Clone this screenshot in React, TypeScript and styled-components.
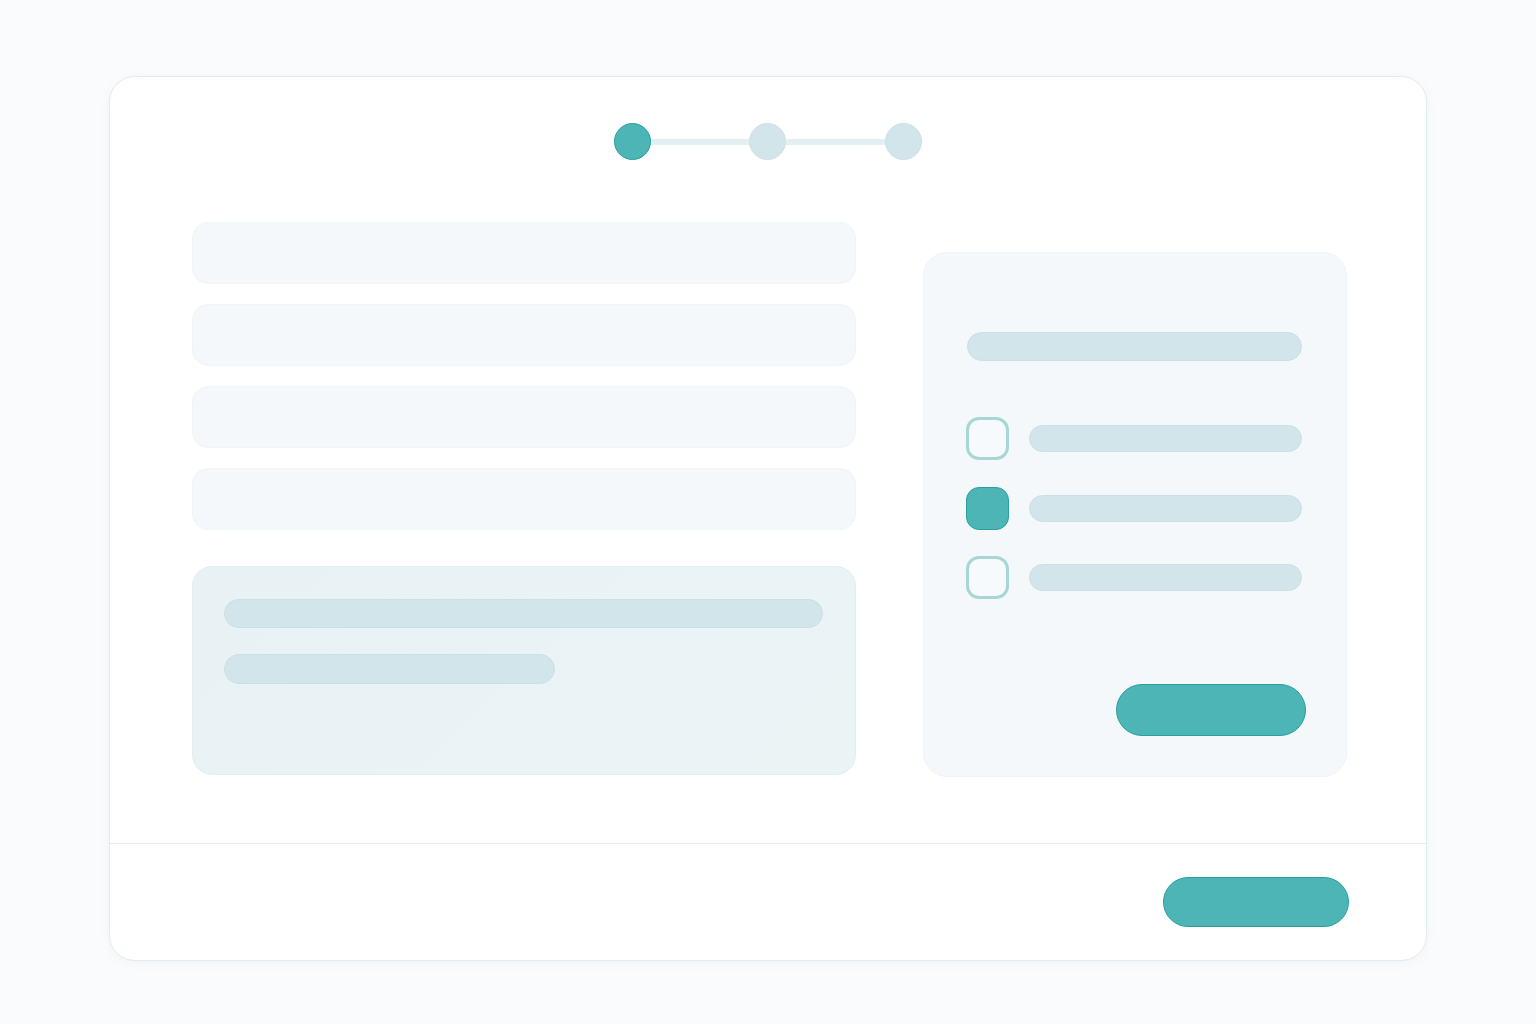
import React from 'react';
import styled, { createGlobalStyle } from 'styled-components';

const GlobalStyle = createGlobalStyle`
  html, body {
    margin: 0;
    padding: 0;
    background: #f9fbfc;
    font-family: 'Inter', 'Liberation Sans', sans-serif;
  }
  * { box-sizing: border-box; }
`;

const Page = styled.div`
  width: 1536px;
  height: 1024px;
  padding-top: 76px;
`;

const Card = styled.div`
  width: 1318px;
  margin: 0 auto;
  background: #fff;
  border: 1px solid #e2ebf0;
  border-radius: 26px;
  box-shadow: 0 2px 10px rgba(150, 180, 195, 0.08);
  overflow: hidden;
`;

const Body = styled.div`
  padding: 46px 78px 66px 82px;
  display: flex;
  flex-direction: column;
  align-items: stretch;
`;

const Stepper = styled.div`
  display: flex;
  align-items: center;
  justify-content: center;
  margin-left: -5px;
  margin-bottom: 62px;
`;

const Dot = styled.div<{ $active?: boolean }>`
  width: 37px;
  height: 37px;
  border-radius: 50%;
  flex-shrink: 0;
  background: ${(p) => (p.$active ? '#4db5b5' : '#d2e5ea')};
  border: 1px solid ${(p) => (p.$active ? '#2a9fa0' : '#cbe0e6')};
`;

const Connector = styled.div`
  width: 98.5px;
  height: 6px;
  background: #e3eff3;
`;

const Columns = styled.div`
  display: flex;
  gap: 67px;
`;

const LeftColumn = styled.div`
  width: 664px;
  display: flex;
  flex-direction: column;
`;

const InputRow = styled.div`
  height: 62px;
  margin-bottom: 20px;
  border-radius: 16px;
  background: #f4f8fb;
  border: 1px solid #eef4f8;
  &:nth-child(4) {
    margin-bottom: 36px;
  }
`;

const InfoPanel = styled.div`
  height: 209px;
  border-radius: 20px;
  background: linear-gradient(135deg, #e8f2f5, #ebf4f5);
  border: 1px solid #e3eef2;
  padding: 32px 32px 0 31px;
  display: flex;
  flex-direction: column;
  gap: 26px;
`;

const Bar = styled.div<{ $width?: number; $height?: number }>`
  width: ${(p) => (p.$width ? `${p.$width}px` : '100%')};
  height: ${(p) => p.$height ?? 29}px;
  border-radius: 999px;
  background: #d2e5ea;
  border: 1px solid #cae0e6;
  flex-shrink: 0;
`;

const OptionBar = styled(Bar)`
  width: auto;
  flex: 1;
`;

const SidePanel = styled.div`
  width: 424px;
  height: 525px;
  margin-top: 30px;
  border-radius: 24px;
  background: #f4f8fb;
  border: 1px solid #eef4f8;
  padding: 79px 44px 40px 43px;
  display: flex;
  flex-direction: column;
`;

const OptionList = styled.div`
  margin-top: 56px;
  display: flex;
  flex-direction: column;
  gap: 26.5px;
`;

const OptionRow = styled.div`
  display: flex;
  align-items: center;
  gap: 20px;
  margin-left: -1px;
`;

const Checkbox = styled.div<{ $checked?: boolean }>`
  width: 43px;
  height: 43px;
  border-radius: 13px;
  flex-shrink: 0;
  background: ${(p) => (p.$checked ? '#4db5b5' : '#f6fafc')};
  border: ${(p) => (p.$checked ? '1px solid #2a9fa0' : '3px solid #a6d7d5')};
`;

const PrimaryButton = styled.div<{ $width: number; $height: number }>`
  width: ${(p) => p.$width}px;
  height: ${(p) => p.$height}px;
  border-radius: 999px;
  background: #4db5b5;
  border: 1px solid #2a9fa0;
  flex-shrink: 0;
`;

const PanelAction = styled.div`
  margin-top: auto;
  margin-right: -4px;
  display: flex;
  justify-content: flex-end;
`;

const Footer = styled.div`
  height: 117px;
  border-top: 1px solid #e2ebf0;
  display: flex;
  align-items: center;
  justify-content: flex-end;
  padding-right: 77px;
`;

const options = [false, true, false];

const App = () => {
  return (
    <>
      <GlobalStyle />
      <Page>
        <Card>
          <Body>
            <Stepper>
              <Dot $active />
              <Connector />
              <Dot />
              <Connector />
              <Dot />
            </Stepper>
            <Columns>
              <LeftColumn>
                <InputRow />
                <InputRow />
                <InputRow />
                <InputRow />
                <InfoPanel>
                  <Bar />
                  <Bar $width={331} $height={30} />
                </InfoPanel>
              </LeftColumn>
              <SidePanel>
                <Bar />
                <OptionList>
                  {options.map((checked, i) => (
                    <OptionRow key={i}>
                      <Checkbox $checked={checked} />
                      <OptionBar $height={27} />
                    </OptionRow>
                  ))}
                </OptionList>
                <PanelAction>
                  <PrimaryButton $width={190} $height={52} />
                </PanelAction>
              </SidePanel>
            </Columns>
          </Body>
          <Footer>
            <PrimaryButton $width={186} $height={50} />
          </Footer>
        </Card>
      </Page>
    </>
  );
};

export default App;
